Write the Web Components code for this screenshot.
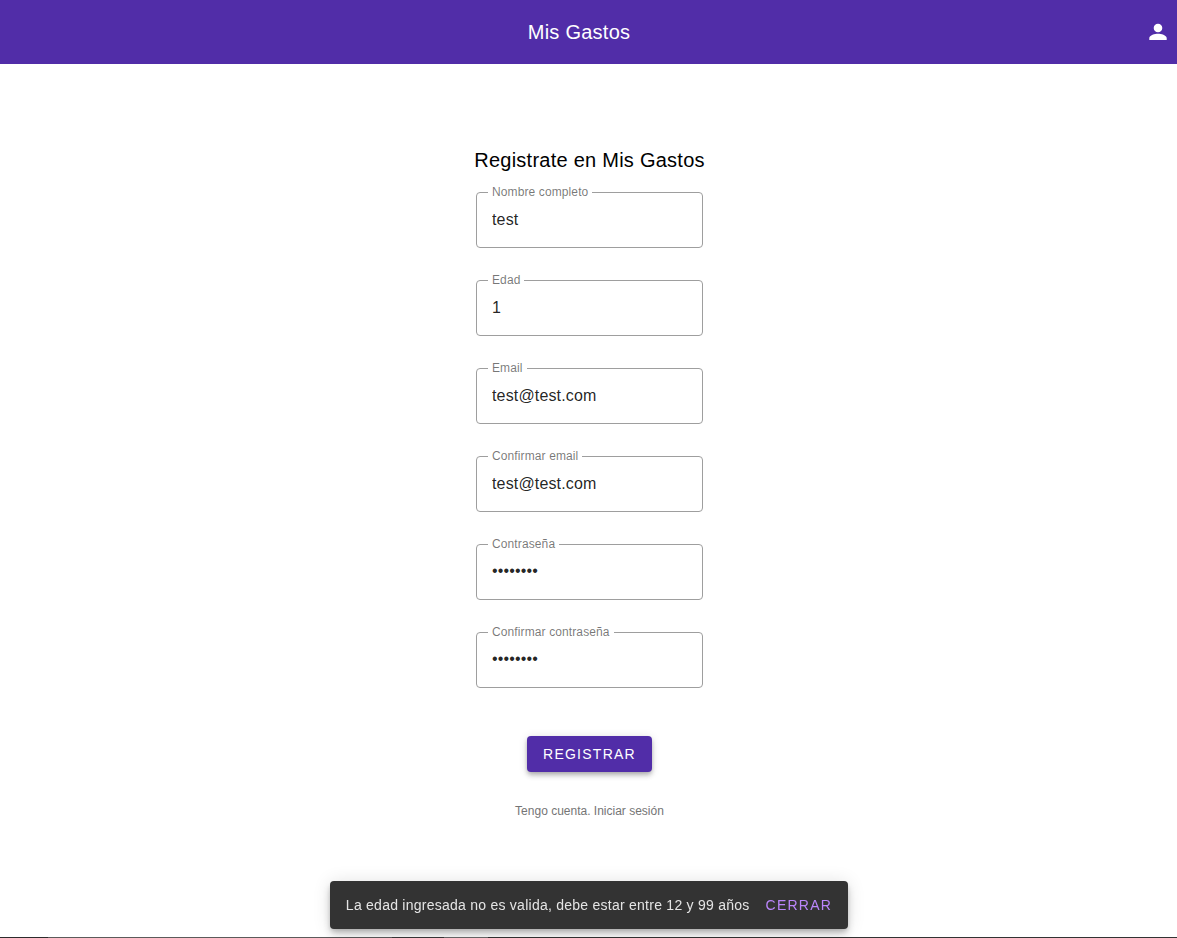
<!DOCTYPE html>
<html lang="es">
<head>
<meta charset="utf-8">
<meta name="viewport" content="width=device-width, initial-scale=1">
<title>Mis Gastos</title>
<style>
  html {
    --primary: #512da8;
    --tracking-title: 0.0125em;
    --tracking-input: 0.009375em;
    --tracking-button: 0.0893em;
    --tracking-body: 0.0179em;
  }
  body { margin: 0; background: #fff; color: #000; font-family: "Liberation Sans", Arial, sans-serif; }
</style>
</head>
<body>
<gastos-app></gastos-app>
<script>
  function define(name, html, connected) {
    const template = document.createElement("template");
    template.innerHTML = html;
    customElements.define(name, class extends HTMLElement {
      constructor() {
        super();
        this.attachShadow({ mode: "open" }).append(template.content.cloneNode(true));
      }
      connectedCallback() {
        if (connected) connected(this, this.shadowRoot);
      }
    });
  }

  define("top-bar", `
    <style>
      :host { display: flex; align-items: center; height: 64px; padding-left: 19px; background: var(--primary); color: #fff; }
      h1 { flex: 1; margin: 0; text-align: center; font-size: 20px; font-weight: 400; line-height: 32px; letter-spacing: var(--tracking-title); }
      button { display: flex; align-items: center; justify-content: center; width: 38px; height: 48px; padding: 0; border: 0; background: none; color: inherit; cursor: pointer; }
      svg { width: 24px; height: 24px; fill: currentColor; }
    </style>
    <h1><slot></slot></h1>
    <button type="button" aria-label="Cuenta">
      <svg viewBox="0 0 24 24" aria-hidden="true"><path d="M12 12.300c2.400 0 4.300-1.900 4.300-4.300S14.400 3.700 12 3.700 7.700 5.600 7.700 8s1.900 4.300 4.300 4.300zm0 1.500c-3 0-8.700 1.400-8.700 4.300V20h17.400v-1.900c0-2.900-5.700-4.300-8.700-4.300z"/></svg>
    </button>`);

  define("outlined-field", `
    <style>
      :host { display: block; position: relative; }
      label { position: absolute; top: -8px; left: 12px; padding: 0 4px; background: #fff; color: rgba(0, 0, 0, 0.54); font-size: 12px; line-height: 16px; letter-spacing: var(--tracking-input); }
      input { display: block; box-sizing: border-box; width: 100%; height: 56px; padding: 0 15px; border: 1px solid #9e9e9e; border-radius: 4px; background: none; color: rgba(0, 0, 0, 0.87); font-family: inherit; font-size: 16px; letter-spacing: var(--tracking-input); outline: none; }
      input[type="password"] { padding-bottom: 2px; }
      input:focus { border-color: var(--primary); }
    </style>
    <input id="control">
    <label for="control"></label>`, (host, root) => {
      const input = root.querySelector("input");
      input.type = host.getAttribute("type") || "text";
      input.value = host.getAttribute("value") || "";
      root.querySelector("label").textContent = host.getAttribute("label");
    });

  define("raised-button", `
    <style>
      :host { display: inline-block; }
      button { display: block; height: 36px; padding: 0 16px; border: 0; border-radius: 4px; background: var(--primary); color: #fff; font-family: inherit; font-size: 14px; font-weight: 400; letter-spacing: var(--tracking-button); text-transform: uppercase; cursor: pointer;
        box-shadow: 0 2px 4px -1px rgba(0, 0, 0, 0.2), 0 4px 5px 0 rgba(0, 0, 0, 0.14), 0 1px 10px 0 rgba(0, 0, 0, 0.12); }
    </style>
    <button type="button"><slot></slot></button>`);

  define("register-form", `
    <style>
      :host { display: block; }
      form { display: flex; flex-direction: column; align-items: center; }
      h2 { margin: 0 0 16px; font-size: 20px; font-weight: 400; line-height: 32px; letter-spacing: var(--tracking-title); text-align: center; }
      .fields { display: grid; gap: 32px; width: 227px; max-width: 100%; }
      raised-button { margin: 48px 0 28px; }
      a { color: #757575; font-size: 12px; line-height: 22px; text-decoration: none; }
    </style>
    <form>
      <h2>Registrate en Mis Gastos</h2>
      <div class="fields">
        <outlined-field label="Nombre completo" value="test"></outlined-field>
        <outlined-field label="Edad" value="1"></outlined-field>
        <outlined-field label="Email" type="email" value="test@test.com"></outlined-field>
        <outlined-field label="Confirmar email" type="email" value="test@test.com"></outlined-field>
        <outlined-field label="Contraseña" type="password" value="password"></outlined-field>
        <outlined-field label="Confirmar contraseña" type="password" value="password"></outlined-field>
      </div>
      <raised-button>Registrar</raised-button>
      <a href="#login">Tengo cuenta. Iniciar sesión</a>
    </form>`);

  define("snack-bar", `
    <style>
      :host { position: fixed; left: 0; right: 0; bottom: 9px; display: flex; justify-content: center; padding: 0 8px 0 9px; pointer-events: none; }
      .surface { display: flex; align-items: center; min-height: 48px; border-radius: 4px; background: #333; pointer-events: auto;
        box-shadow: 0 3px 5px -1px rgba(0, 0, 0, 0.2), 0 6px 10px 0 rgba(0, 0, 0, 0.14), 0 1px 18px 0 rgba(0, 0, 0, 0.12); }
      p { margin: 0; padding: 0 8px 0 16px; color: rgba(255, 255, 255, 0.87); font-size: 14px; line-height: 20px; letter-spacing: var(--tracking-body); }
      button { height: 36px; margin-right: 8px; padding: 0 8px; border: 0; background: none; color: #bb86fc; font-family: inherit; font-size: 14px; letter-spacing: var(--tracking-button); text-transform: uppercase; cursor: pointer; }
    </style>
    <div class="surface" role="status">
      <p><slot></slot></p>
      <button type="button">Cerrar</button>
    </div>`);

  define("gastos-app", `
    <style>
      :host { display: flex; flex-direction: column; min-height: 100vh; }
      main { flex: 1; padding: 80px 0 0 2px; }
      footer { height: 1px; background: linear-gradient(to right, #2d2b2c 48px, #5c5a5b 48px 392px, #3a3839 392px 444px, #6b696a 444px 488px, #333 488px); }
    </style>
    <top-bar>Mis Gastos</top-bar>
    <main><register-form></register-form></main>
    <footer></footer>
    <snack-bar>La edad ingresada no es valida, debe estar entre 12 y 99 años</snack-bar>`);
</script>
</body>
</html>
